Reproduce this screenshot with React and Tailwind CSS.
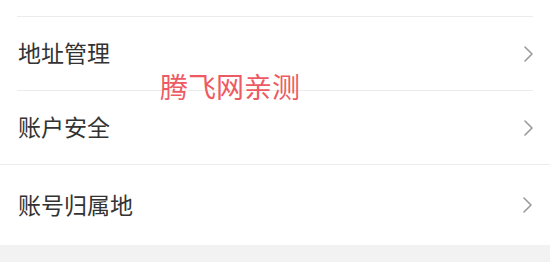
import React from "react";

const font = { fontFamily: '"Noto Sans CJK SC", "Noto Sans", sans-serif' };

function Chevron() {
  return (
    <svg width="9" height="16" viewBox="0 0 9 16" fill="none">
      <polyline
        points="1,1 8,8 1,15"
        stroke="#9a9a9a"
        strokeWidth="1.6"
        strokeLinecap="round"
        strokeLinejoin="round"
      />
    </svg>
  );
}

function Row({ label, full, height }) {
  return (
    <div
      className={
        "flex items-center justify-between border-t border-[#ececec] " +
        (full ? "px-[18px] " : "mx-[17px] pl-[1px] ") +
        height
      }
    >
      <span className="text-[23px] leading-none text-[#333333] -mt-[2px]">{label}</span>
      <Chevron />
    </div>
  );
}

export default function App() {
  return (
    <div className="relative w-[550px] h-[275px] bg-white overflow-hidden" style={font}>
      <div className="pt-4">
        <Row label="地址管理" height="h-[74px]" />
        <Row label="账户安全" height="h-[74px]" />
        <Row label="账号归属地" full height="h-[81px]" />
        <div className="h-[17px] bg-[#f2f2f2]"></div>
      </div>
      <div className="absolute left-[160px] top-[70px] text-[28px] leading-[32px] text-[#ee5a63]">
        腾飞网亲测
      </div>
    </div>
  );
}
